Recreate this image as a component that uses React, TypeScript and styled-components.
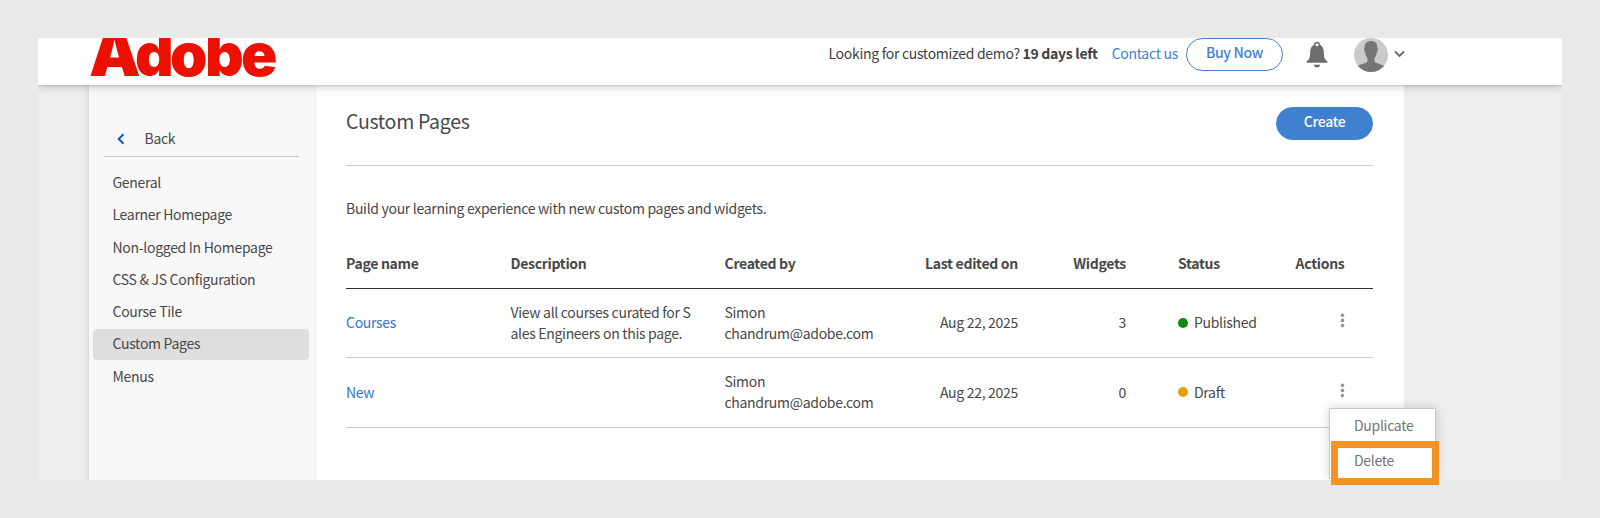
import React from "react";
import styled, { createGlobalStyle } from "styled-components";

const GlobalStyle = createGlobalStyle`
  * { box-sizing: border-box; }
  body {
    margin: 0;
    background: #e9e9e9;
    font-family: "Noto Sans CJK SC", "Noto Sans", sans-serif;
    font-size: 14px;
    line-height: 21px;
    letter-spacing: -0.3px;
    color: #484848;
  }
`;

const Page = styled.div`
  height: 518px;
  padding: 38px;
`;

const Frame = styled.div`
  height: 442px;
  display: flex;
  flex-direction: column;
  background: linear-gradient(to right, #eeeeee 43px, #e9e9e9 48px, #d9d9d9 51px, #eeeeee 51px);
`;

const Header = styled.header`
  height: 47px;
  flex: none;
  display: flex;
  align-items: flex-start;
  padding-left: 52px;
  background: #fff;
  box-shadow: 0 1px 2px rgba(0, 0, 0, 0.12), 0 2px 9px rgba(0, 0, 0, 0.18);
  clip-path: inset(0 0 -16px 0);
  z-index: 1;
`;

const Logo = styled.svg`
  display: block;
  width: 188px;
  height: 42px;
  overflow: hidden;
  font-family: Inter, "Open Sans", sans-serif;
  font-weight: 900;
  letter-spacing: 0;
`;

const Trial = styled.div`
  margin-left: 550.5px;
  width: 350px;
  height: 31px;
  display: flex;
  align-items: center;
  white-space: pre;
  color: #3f3f3f;
`;

const ContactLink = styled.a`
  margin-left: 14px;
  color: #3f80d0;
`;

const Pill = styled.button<{ $solid?: boolean }>`
  height: 33px;
  width: 97px;
  padding: 0 0 4px;
  border: 1px solid #4080d0;
  border-radius: 17px;
  background: ${(p) => (p.$solid ? "#4080d0" : "#fff")};
  color: ${(p) => (p.$solid ? "#fff" : "#3f80d0")};
  font: 500 14px/21px "Noto Sans CJK SC", sans-serif;
  letter-spacing: -0.28px;
`;

const BuySlot = styled.div`
  margin: 0 0 0 7.5px;
`;

const Bell = styled.svg`
  margin: 3px 0 0 23px;
`;

const Avatar = styled.svg`
  margin-left: 26px;
`;

const Caret = styled.svg`
  margin: 12px 0 0 6px;
`;

const Body = styled.div`
  flex: 1;
  display: flex;
  margin-left: 51px;
  width: 1315px;
  background: #fff;
`;

const Sidebar = styled.nav`
  width: 225px;
  padding: 43px 5px 0 4px;
  background: #f8f8f8;
`;

const BackRow = styled.div`
  display: flex;
  align-items: center;
  height: 29px;
  margin: 0 10px 11px 10.5px;
  padding: 0 0 7px 13px;
  border-bottom: 1px solid #c9c9c9;
`;

const BackLabel = styled.span`
  margin-left: 20px;
`;

const NavItem = styled.div<{ $active?: boolean }>`
  height: 31px;
  margin-bottom: 1.25px;
  padding: 4px 0 0 19.5px;
  border-radius: 4px;
  background: ${(p) => (p.$active ? "#dedede" : "transparent")};
`;

const Content = styled.main`
  width: 1059px;
  padding-left: 32px;
  background: linear-gradient(to right, #efefef, #fbfbfb 2px, #fff 5px);
`;

const TitleRow = styled.div`
  height: 81px;
  display: flex;
  justify-content: space-between;
  align-items: flex-start;
  padding-top: 22px;
  border-bottom: 1px solid #cbcbcb;
`;

const Title = styled.h1`
  margin: -1px 0 0;
  font-size: 19.5px;
  line-height: 29px;
  font-weight: 400;
`;

const Intro = styled.p`
  margin: 32px 0 33.5px;
`;

const Row = styled.div<{ $head?: boolean }>`
  position: relative;
  display: grid;
  grid-template-columns: 164.5px 214px 160.5px 133px 108px 52px 100px 1fr;
  align-items: center;
  height: ${(p) => (p.$head ? "36px" : "69.5px")};
  padding-right: 28.5px;
  padding-bottom: ${(p) => (p.$head ? "14px" : "0.5px")};
  border-bottom: 1px solid ${(p) => (p.$head ? "#2c2c2c" : "#cbcbcb")};
  font-weight: ${(p) => (p.$head ? 700 : 400)};
`;

const Cell = styled.div<{ $right?: boolean }>`
  text-align: ${(p) => (p.$right ? "right" : "left")};
  white-space: pre-line;
`;

const PageLink = styled.a`
  color: #3575cb;
`;

const Status = styled.div<{ $color: string }>`
  display: flex;
  align-items: center;
  gap: 6px;
  &::before {
    content: "";
    width: 10px;
    height: 10px;
    border-radius: 50%;
    background: ${(p) => p.$color};
  }
`;

const Actions = styled.div`
  display: flex;
  justify-content: flex-end;
  padding-bottom: 4px;
`;

const Menu = styled.div`
  position: absolute;
  left: 983px;
  top: 50px;
  width: 107px;
  height: 71px;
  padding-top: 6px;
  border: 1px solid #c8c8c8;
  background: #fff;
  box-shadow: 0 0 10px rgba(0, 0, 0, 0.18);
  clip-path: inset(-14px -14px 0 -14px);
  color: #747474;
`;

const MenuItem = styled.div`
  height: 35px;
  padding-left: 24px;
`;

const Highlight = styled.div`
  position: absolute;
  left: 985px;
  top: 83px;
  width: 108px;
  height: 44px;
  border: 7px solid #f39323;
`;

const navItems = [
  "General",
  "Learner Homepage",
  "Non-logged In Homepage",
  "CSS & JS Configuration",
  "Course Tile",
  "Custom Pages",
  "Menus",
];

const rows = [
  { name: "Courses", description: "View all courses curated for S\nales Engineers on this page.", widgets: 3, status: "Published", color: "#128a12" },
  { name: "New", description: "", widgets: 0, status: "Draft", color: "#e6a006", menu: true },
];

const Dots = () => (
  <svg width="5" height="15" viewBox="0 0 5 15" fill="#959595">
    <circle cx="2.5" cy="2.2" r="1.8" />
    <circle cx="2.5" cy="7.4" r="1.8" />
    <circle cx="2.5" cy="12.6" r="1.8" />
  </svg>
);

export default function App() {
  return (
    <>
      <GlobalStyle />
      <Page>
        <Frame>
          <Header>
            <Logo viewBox="0 0 188 42">
              <text y="38" fontSize="60" fill="#ec1000">
                <tspan x="-1" fontSize="65">A</tspan>
                <tspan x="45 80 115 151">dobe</tspan>
              </text>
            </Logo>
            <Trial>
              {"Looking for customized demo? "}<b>19 days left</b>
              <ContactLink>Contact us</ContactLink>
            </Trial>
            <BuySlot><Pill>Buy Now</Pill></BuySlot>
            <Bell width="22" height="27" viewBox="0 0 22 27" fill="#6d6d6d">
              <path fillRule="evenodd" d="M11 .8a3 3 0 0 1 3 3c2.500 1.300 3.800 4.200 3.800 7.200 0 6 1 7.500 3.600 9.300.3.300.2 1.500-.4 1.500H1c-.6 0-.7-1.200-.4-1.500C3.200 18.500 4.200 17 4.200 11c0-3 1.300-5.900 3.800-7.200a3 3 0 0 1 3-3Zm0 1.500a1.500 1.500 0 1 0 0 3 1.500 1.500 0 0 0 0-3Z" />
              <path d="M7.700 23.800h6.600a3.400 3.400 0 0 1-6.600 0Z" />
            </Bell>
            <Avatar width="34" height="34" viewBox="0 0 34 34">
              <defs><clipPath id="face"><circle cx="17" cy="17" r="17" /></clipPath></defs>
              <g clipPath="url(#face)">
                <rect width="34" height="34" fill="#cacaca" />
                <path fill="#757575" d="M17 3c4.600 0 6.500 2.600 6.300 7 .9.300.7 2.800-.5 4.500-.3 2.800-1.400 4.400-2.300 5.500v3.600c0 1.700 8.500 3 11 5.400V34H2v-5c2.500-2.400 11.500-3.700 11.500-5.400V20c-1-1.100-2-2.700-2.300-5.500-1.200-1.700-1.400-4.200-.5-4.500-.2-4.400 1.700-7 6.300-7Z" />
              </g>
            </Avatar>
            <Caret width="11" height="8" viewBox="0 0 11 8" fill="none" stroke="#666" strokeWidth="1.8">
              <path d="M1 1.500 5.500 6 10 1.500" />
            </Caret>
          </Header>
          <Body>
            <Sidebar>
              <BackRow>
                <svg width="8" height="12" viewBox="0 0 8 12" fill="none" stroke="#1256cc" strokeWidth="2">
                  <path d="M6.500 1.200 1.700 6l4.800 4.800" />
                </svg>
                <BackLabel>Back</BackLabel>
              </BackRow>
              {navItems.map((item) => (
                <NavItem key={item} $active={item === "Custom Pages"}>{item}</NavItem>
              ))}
            </Sidebar>
            <Content>
              <TitleRow>
                <Title>Custom Pages</Title>
                <Pill $solid>Create</Pill>
              </TitleRow>
              <Intro>Build your learning experience with new custom pages and widgets.</Intro>
              <Row $head>
                <Cell>Page name</Cell>
                <Cell>Description</Cell>
                <Cell>Created by</Cell>
                <Cell $right>Last edited on</Cell>
                <Cell $right>Widgets</Cell>
                <span />
                <Cell>Status</Cell>
                <Cell $right>Actions</Cell>
              </Row>
              {rows.map((r) => (
                <Row key={r.name}>
                  <PageLink>{r.name}</PageLink>
                  <Cell>{r.description}</Cell>
                  <Cell>{"Simon\nchandrum@adobe.com"}</Cell>
                  <Cell $right>Aug 22, 2025</Cell>
                  <Cell $right>{r.widgets}</Cell>
                  <span />
                  <Status $color={r.color}>{r.status}</Status>
                  <Actions><Dots /></Actions>
                  {r.menu && (
                    <>
                      <Menu>
                        <MenuItem>Duplicate</MenuItem>
                        <MenuItem>Delete</MenuItem>
                      </Menu>
                      <Highlight />
                    </>
                  )}
                </Row>
              ))}
            </Content>
          </Body>
        </Frame>
      </Page>
    </>
  );
}
